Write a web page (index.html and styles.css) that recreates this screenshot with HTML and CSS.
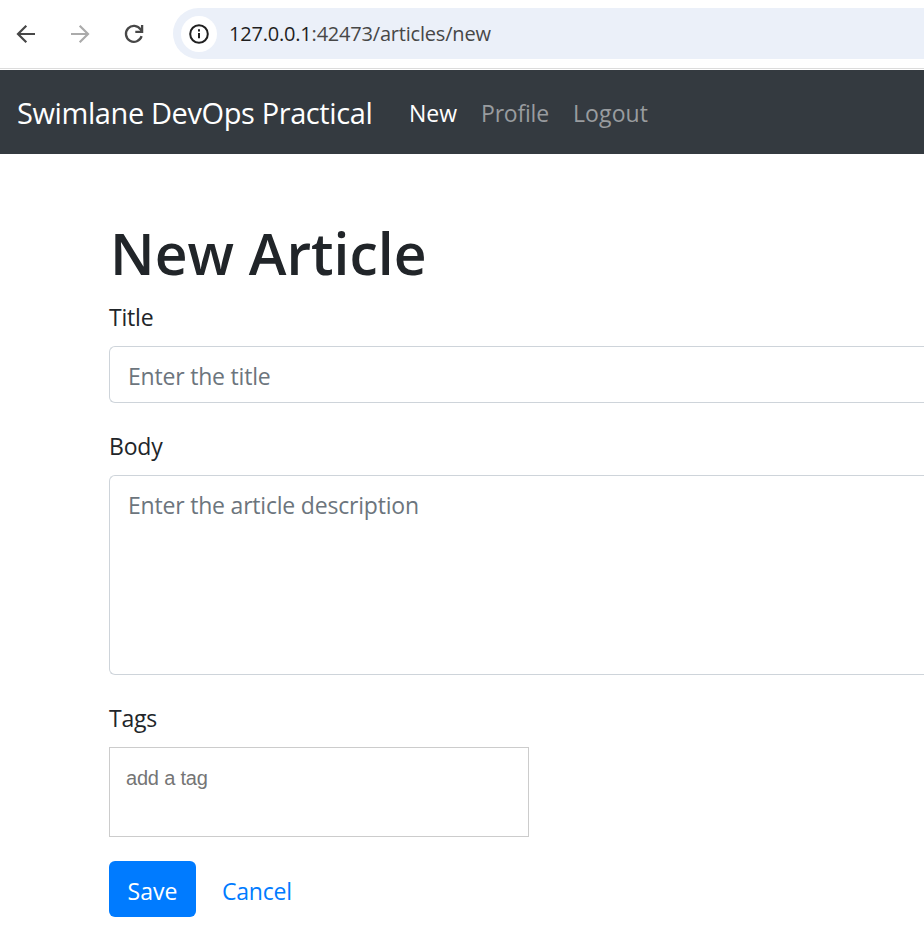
FILE: index.html
```html
<!DOCTYPE html>
<html lang="en">
<head>
<meta charset="utf-8">
<title>New Article</title>
<link rel="stylesheet" href="styles.css">
</head>
<body>
<header class="toolbar">
  <div class="tool tool-back"><svg width="24" height="24" viewBox="0 0 24 24" fill="none" stroke="#474747" stroke-width="2.2"><path d="M21 12H4.5M12.3 3.7L4 12l8.3 8.3"/></svg></div>
  <div class="tool tool-forward"><svg width="24" height="24" viewBox="0 0 24 24" fill="none" stroke="#ababab" stroke-width="2.2"><path d="M3 12h16.5M11.7 3.7L20 12l-8.3 8.3"/></svg></div>
  <div class="tool tool-reload"><svg width="24" height="24" viewBox="0 0 24 24" fill="none" stroke="#474747" stroke-width="2.3"><path d="M19.6 14.2A8 8 0 1 1 18.6 7.4L20 9.2M20.1 3v6.8H13.3"/></svg></div>
  <div class="address">
    <span class="site-info"><svg width="22" height="22" viewBox="0 0 22 22" fill="none" stroke="#1f1f1f"><circle cx="11" cy="11" r="8.8" stroke-width="2"/><path d="M11 10v5.3M11 6.3v2.2" stroke-width="2"/></svg></span>
    <span class="url"><span class="host">127.0.0.1</span>:42473/articles/new</span>
  </div>
</header>
<nav class="navbar">
  <a class="brand">Swimlane DevOps Practical</a>
  <a class="link active link-new">New</a>
  <a class="link link-profile">Profile</a>
  <a class="link link-logout">Logout</a>
</nav>
<main class="container">
  <h1>New Article</h1>
  <form>
    <div class="group">
      <label for="title">Title</label>
      <input class="control" id="title" type="text" placeholder="Enter the title">
    </div>
    <div class="group">
      <label for="body">Body</label>
      <textarea class="control area" id="body" placeholder="Enter the article description"></textarea>
    </div>
    <div class="group tags-group">
      <label for="tags">Tags</label>
      <div class="tags"><input id="tags" type="text" placeholder="add a tag"></div>
    </div>
    <div class="actions">
      <button class="save" type="button">Save</button>
      <a class="cancel">Cancel</a>
    </div>
  </form>
</main>
</body>
</html>
```
FILE: styles.css
```css
* { box-sizing: border-box; }
body {
  margin: 0;
  background: #fff;
  color: #212529;
  font: 23px/36px "Open Sans", "Noto Sans", sans-serif;
}
.toolbar {
  display: flex;
  align-items: center;
  height: 69px;
  padding-bottom: 1px;
  border-bottom: 1px solid #dcdcdc;
  margin-bottom: 1px;
}
.tool { display: flex; flex: none; width: 54px; justify-content: center; }
.tool-back { margin-left: -1px; }
.tool-reload { margin-right: 12px; }
.address {
  display: flex;
  align-items: center;
  flex: 1;
  height: 51px;
  padding-left: 8px;
  border-radius: 26px 0 0 26px;
  background: #ebf0f9;
}
.site-info {
  display: flex;
  align-items: center;
  justify-content: center;
  width: 36px;
  height: 36px;
  margin-right: 12px;
  border-radius: 50%;
  background: #fff;
}
.url { font-size: 20px; letter-spacing: -0.2px; color: #474747; white-space: nowrap; }
.host { color: #1f1f1f; }
.navbar {
  display: flex;
  align-items: center;
  height: 84px;
  padding: 2px 0 0 17px;
  background: #343a40;
  white-space: nowrap;
}
.brand { flex: none; width: 392px; color: #fff; font-size: 29px; letter-spacing: -0.4px; }
.link { flex: none; color: #999c9f; }
.link.active { color: #fff; }
.link-new { width: 72px; }
.link-profile { width: 92px; letter-spacing: -0.2px; }
.link-logout { letter-spacing: 0.1px; }
.container { padding: 63px 0 0 109px; }
h1 { margin: 0 0 10px 1px; font-size: 57px; line-height: 72px; font-weight: 600; }
.group { margin-bottom: 25px; }
.tags-group { margin-bottom: 24px; }
label { display: block; margin-bottom: 11px; letter-spacing: -0.2px; }
.control {
  display: block;
  width: 100%;
  height: 57px;
  padding: 9px 18px 6px;
  border: 1px solid #ced4da;
  border-right: 0;
  border-radius: 6px 0 0 6px;
  background: #fff;
  font: inherit;
  letter-spacing: -0.2px;
}
.area { height: 200px; padding: 11px 18px; resize: none; }
.control::placeholder { color: #6c757d; opacity: 1; }
.tags {
  width: 420px;
  height: 90px;
  padding: 15px 16px;
  border: 1px solid #ccc;
}
.tags input {
  display: block;
  width: 100%;
  height: 30px;
  padding: 0;
  border: 0;
  font: 20px "Liberation Sans", Arial, sans-serif;
  letter-spacing: -0.2px;
}
.tags input::placeholder { color: #757575; }
.actions { display: flex; align-items: center; }
.save {
  width: 87px;
  height: 56px;
  margin-right: 26px;
  padding: 4px 0 0;
  border: 0;
  border-radius: 6px;
  background: #007bff;
  color: #fff;
  font: inherit;
}
.cancel { padding-top: 4px; color: #007bff; letter-spacing: -0.2px; }
```
